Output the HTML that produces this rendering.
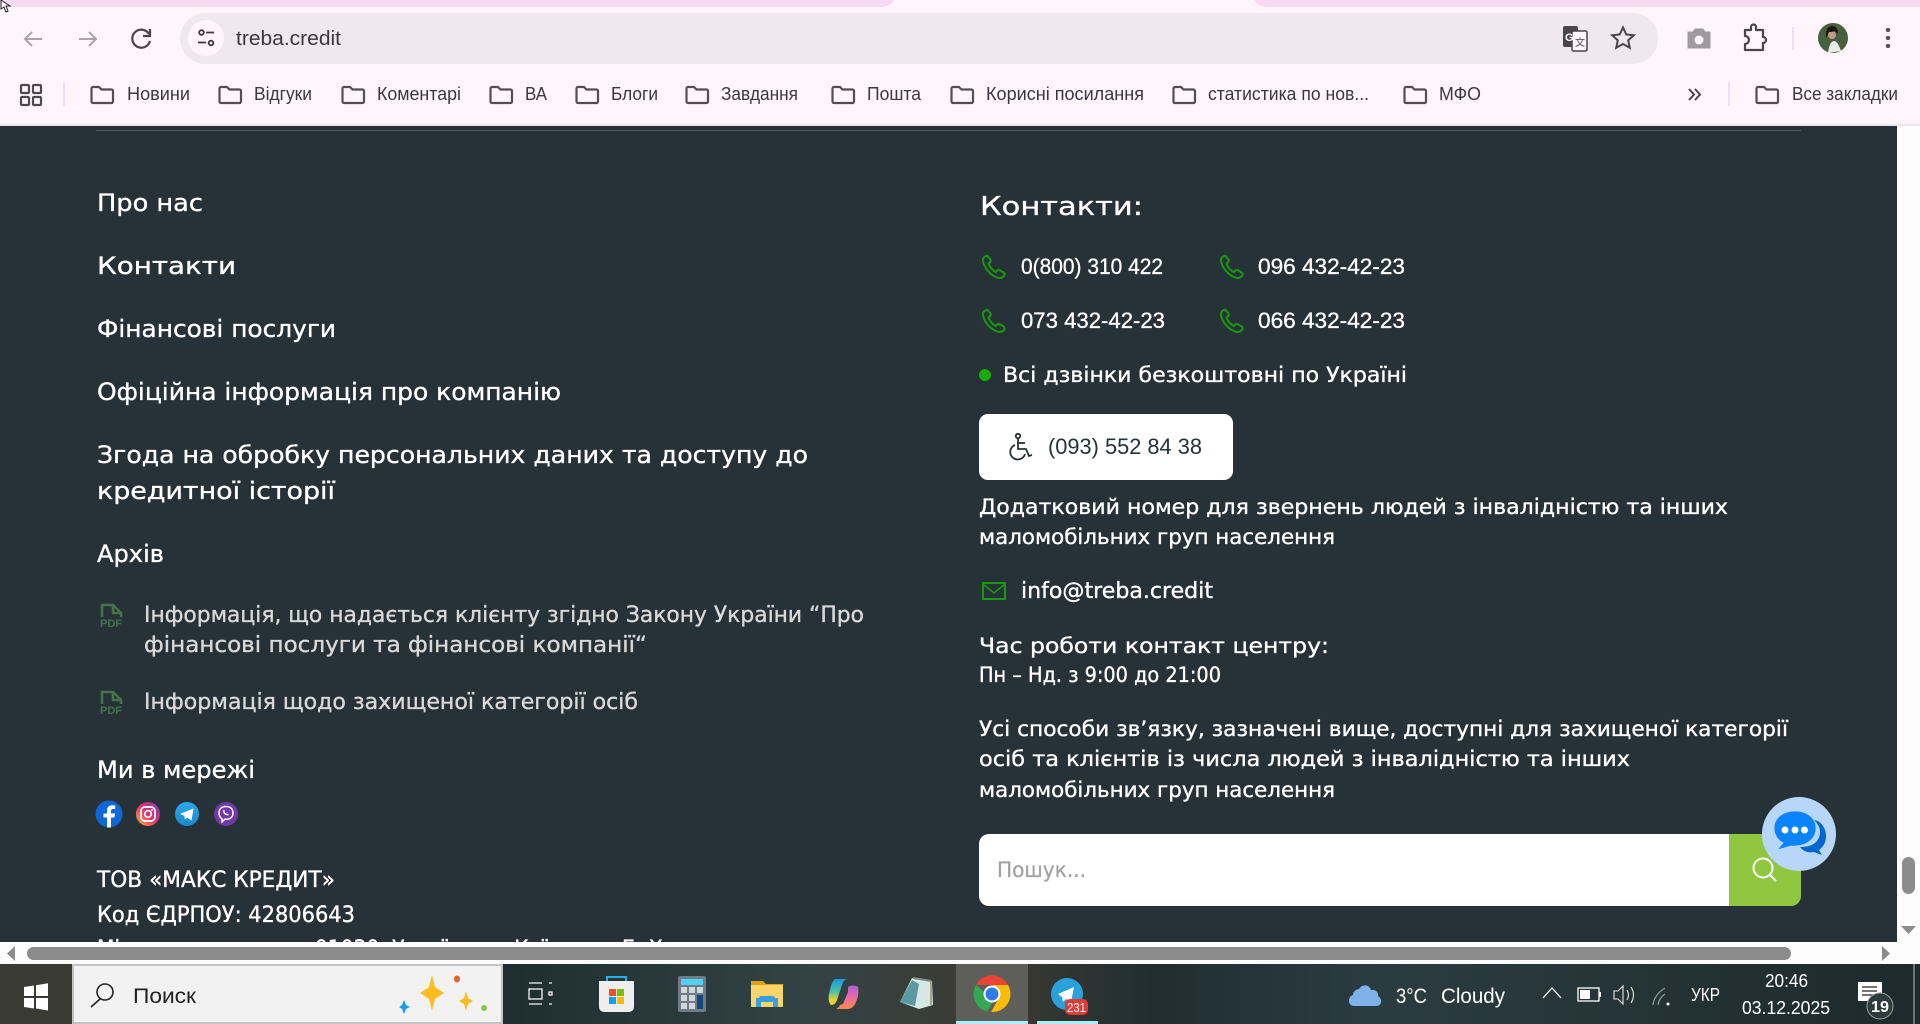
<!DOCTYPE html>
<html lang="uk"><head><meta charset="utf-8"><title>treba.credit</title>
<style>
html,body{margin:0;padding:0;width:1920px;height:1024px;overflow:hidden;background:#263238}
svg{display:block}
text{white-space:pre}
.c{font-family:"DejaVu Sans","Noto Sans CJK SC",sans-serif;fill:#fff;stroke:#fff;stroke-width:.35}
.g{fill:#d9d9d9;stroke:#d9d9d9}
.n{font-family:"Liberation Sans","Noto Sans CJK SC",sans-serif;fill:#fff;stroke:#fff;stroke-width:.3}
.u{font-family:"Liberation Sans","Noto Sans CJK SC",sans-serif;fill:#3d3640;font-size:18px}
.t{font-family:"Liberation Sans","Noto Sans CJK SC",sans-serif;fill:#fff}
</style></head><body>
<svg width="1920" height="1024" viewBox="0 0 1920 1024" xmlns="http://www.w3.org/2000/svg">
<defs>
<g id="fld"><path d="M1.500 4.500a1.500 1.500 0 0 1 1.500-1.500h6l2.500 2.500h10a1.500 1.500 0 0 1 1.500 1.500v10.500a1.500 1.500 0 0 1-1.500 1.500H3a1.500 1.500 0 0 1-1.500-1.500z" transform="translate(0,-1)" fill="none" stroke="#544e53" stroke-width="2.200"/></g>
<g id="ph"><path d="M-8-11c-2 1-3.500 2.500-3 5 1 6 6 13 13 16 3 1.500 6 1 8-1 1.200-1.500 1-2.500-.5-3.500l-3.500-2.200c-1.200-.7-2.200-.5-3 .5l-1 1.200c-3-1-6.500-5-7.500-8.500l1.300-1c1-.8 1.200-1.800.7-3L-6-10.500c-.5-1-1.200-1-2-.5z" fill="none" stroke="#169a0b" stroke-width="2"/></g>
<g id="pdf" fill="none" stroke="#44754a" stroke-width="2.500"><path d="M2 14V2h11l8 8v4M13 2v8h8"/><text x="0" y="24" font-family="Liberation Sans" font-weight="700" font-size="11" fill="#44754a" stroke="none" textLength="22" lengthAdjust="spacingAndGlyphs">PDF</text></g>
<linearGradient id="tb" x1="0" x2="1" y1="0" y2="0"><stop offset="0" stop-color="#3a3a34"/><stop offset=".27" stop-color="#1f2f31"/><stop offset=".42" stop-color="#334345"/><stop offset=".52" stop-color="#3c3a30"/><stop offset=".6" stop-color="#202e32"/><stop offset=".72" stop-color="#2b3c40"/><stop offset="1" stop-color="#1d2a2d"/></linearGradient>
<linearGradient id="ig" x1="0" x2="1" y1="1" y2="0"><stop offset="0" stop-color="#fdb944"/><stop offset=".5" stop-color="#e1306c"/><stop offset="1" stop-color="#7a3fc0"/></linearGradient>
<linearGradient id="tg" x1="0" x2="0" y1="0" y2="1"><stop offset="0" stop-color="#2aabee"/><stop offset="1" stop-color="#1c88c7"/></linearGradient>
<linearGradient id="cp1" x1="0" x2="0" y1="0" y2="1"><stop offset="0" stop-color="#0f9be8"/><stop offset=".5" stop-color="#50c2a0"/><stop offset=".8" stop-color="#e8d030"/></linearGradient>
<linearGradient id="cp2" x1="0" x2="0" y1="0" y2="1"><stop offset="0" stop-color="#b45fd8"/><stop offset=".5" stop-color="#e86aa8"/><stop offset="1" stop-color="#ff8a4c"/></linearGradient>
</defs>

<!-- Chrome frame -->
<rect width="1920" height="126" fill="#fff5fb"/>
<path d="M0 0H894Q890 7 880 7H0z" fill="#f7d9f0"/>
<path d="M1254 0H1920V7H1268Q1258 7 1254 0z" fill="#f7d9f0"/>
<rect x="0" y="124" width="1920" height="2" fill="#eee4ea"/>
<path d="M1 0l0 9 3-2 2 5 2-1-2-5h4z" fill="#fff" stroke="#222"/>
<path d="M42 39H25M32 32l-7 7 7 7" fill="none" stroke="#aba5aa" stroke-width="2"/>
<path d="M79 39H96M89 32l7 7-7 7" fill="none" stroke="#aba5aa" stroke-width="2"/>
<path d="M149 34a9 9 0 1 0 1 7M150 29v7h-7" fill="none" stroke="#4b444a" stroke-width="2.200"/>
<rect x="180" y="13" width="1478" height="51" rx="25.500" fill="#f0e7ef"/>
<circle cx="206" cy="38" r="18" fill="#fff5fb"/>
<g fill="none" stroke="#3d3640" stroke-width="1.800"><circle cx="201.500" cy="32.500" r="2.300"/><path d="M206 32.500h8M198 42.500h8"/><circle cx="211" cy="43" r="2.300"/></g>
<text x="236" y="45" class="u" style="font-size:20px" textLength="105" lengthAdjust="spacingAndGlyphs">treba.credit</text>
<rect x="1563" y="26" width="15" height="21" rx="2" fill="#4b444a"/><rect x="1572" y="31" width="15" height="20" rx="1.500" fill="#fff5fb" stroke="#4b444a" stroke-width="1.500"/>
<text x="1565" y="41" font-family="Liberation Sans" font-weight="700" font-size="11" fill="#fff">G</text>
<text x="1575" y="46" font-family="Noto Sans CJK SC" font-size="10" fill="#4b444a">文</text>
<path d="M1623 27.500l3.300 7 7.500.8-5.600 5 1.600 7.500-6.800-3.800-6.800 3.800 1.600-7.500-5.600-5 7.500-.8z" fill="none" stroke="#4b444a" stroke-width="2"/>
<path d="M1688 32h5l2-3h8l2 3h5v16h-22z" fill="#9f9a9e" stroke="#9f9a9e" stroke-linejoin="round"/><circle cx="1699" cy="40" r="4.500" fill="#fff5fb"/>
<path d="M1745 30h6v-3a2 2 0 0 1 5 0v3h7v7a3 3 0 0 1 0 6v7h-18v-6a3.500 3.500 0 0 0 0-8z" fill="none" stroke="#4b444a" stroke-width="2.200" stroke-linejoin="round"/>
<rect x="1792" y="27" width="2" height="23" fill="#f7d9f0"/>
<circle cx="1833" cy="38" r="15" fill="#47603f"/><path d="M1828 53c1-8 3-12 6-12s5 4 7 10z" fill="#e8ecea"/><circle cx="1832" cy="35" r="4" fill="#c39a85"/><path d="M1826 38c-1-8 2-12 6-12s6 3 6 8l-3-3c-3 1-5 1-6 1z" fill="#1a1714"/>
<g fill="#4b444a"><circle cx="1888" cy="30" r="2"/><circle cx="1888" cy="38" r="2"/><circle cx="1888" cy="46" r="2"/></g>

<g fill="none" stroke="#4f484e" stroke-width="2.200"><rect x="21" y="85" width="8" height="8" rx="1"/><rect x="33" y="85" width="8" height="8" rx="1"/><rect x="21" y="97" width="8" height="8" rx="1"/><rect x="33" y="97" width="8" height="8" rx="1"/></g>
<rect x="63" y="82" width="2" height="24" fill="#f7d9f0"/>
<use href="#fld" x="90" y="85"/><text x="127" y="100" class="u" textLength="63" lengthAdjust="spacingAndGlyphs">Новини</text>
<use href="#fld" x="218" y="85"/><text x="254" y="100" class="u" textLength="58" lengthAdjust="spacingAndGlyphs">Відгуки</text>
<use href="#fld" x="341" y="85"/><text x="377" y="100" class="u" textLength="84" lengthAdjust="spacingAndGlyphs">Коментарі</text>
<use href="#fld" x="489" y="85"/><text x="525" y="100" class="u" textLength="22" lengthAdjust="spacingAndGlyphs">ВА</text>
<use href="#fld" x="575" y="85"/><text x="611" y="100" class="u" textLength="47" lengthAdjust="spacingAndGlyphs">Блоги</text>
<use href="#fld" x="685" y="85"/><text x="721" y="100" class="u" textLength="77" lengthAdjust="spacingAndGlyphs">Завдання</text>
<use href="#fld" x="831" y="85"/><text x="867" y="100" class="u" textLength="54" lengthAdjust="spacingAndGlyphs">Пошта</text>
<use href="#fld" x="950" y="85"/><text x="986" y="100" class="u" textLength="158" lengthAdjust="spacingAndGlyphs">Корисні посилання</text>
<use href="#fld" x="1172" y="85"/><text x="1208" y="100" class="u" textLength="161" lengthAdjust="spacingAndGlyphs">статистика по нов...</text>
<use href="#fld" x="1403" y="85"/><text x="1439" y="100" class="u" textLength="42" lengthAdjust="spacingAndGlyphs">МФО</text>
<path d="M1689 89l5 5.500-5 5.500M1695 89l5 5.500-5 5.500" fill="none" stroke="#4b444a" stroke-width="2"/>
<rect x="1728" y="82" width="2" height="24" fill="#f7d9f0"/>
<use href="#fld" x="1755" y="85"/><text x="1792" y="100" class="u" textLength="106" lengthAdjust="spacingAndGlyphs">Все закладки</text>

<!-- Page -->
<rect x="0" y="126" width="1897" height="816" fill="#263238"/>
<rect x="96" y="130" width="1705" height="1" fill="#4d595f"/>

<text class="c" x="97" y="211" font-size="24" textLength="106" lengthAdjust="spacingAndGlyphs">Про нас</text>
<text class="c" x="97" y="274" font-size="24" textLength="139" lengthAdjust="spacingAndGlyphs">Контакти</text>
<text class="c" x="97" y="337" font-size="24" textLength="239" lengthAdjust="spacingAndGlyphs">Фінансові послуги</text>
<text class="c" x="97" y="400" font-size="24" textLength="464" lengthAdjust="spacingAndGlyphs">Офіційна інформація про компанію</text>
<text class="c" x="97" y="463" font-size="24" textLength="711" lengthAdjust="spacingAndGlyphs">Згода на обробку персональних даних та доступу до</text>
<text class="c" x="97" y="499" font-size="24" textLength="238" lengthAdjust="spacingAndGlyphs">кредитної історії</text>
<text class="c" x="97" y="562" font-size="24" textLength="67" lengthAdjust="spacingAndGlyphs">Архів</text>
<text class="c g" x="144" y="622" font-size="22" textLength="720" lengthAdjust="spacingAndGlyphs">Інформація, що надається клієнту згідно Закону України “Про</text>
<text class="c g" x="144" y="652" font-size="22" textLength="503" lengthAdjust="spacingAndGlyphs">фінансові послуги та фінансові компанії“</text>
<text class="c g" x="144" y="709" font-size="22" textLength="494" lengthAdjust="spacingAndGlyphs">Інформація щодо захищеної категорії осіб</text>
<text class="c" x="97" y="778" font-size="24" textLength="158" lengthAdjust="spacingAndGlyphs">Ми в мережі</text>
<text class="c" x="97" y="887" font-size="22" textLength="238" lengthAdjust="spacingAndGlyphs">ТОВ «МАКС КРЕДИТ»</text>
<text class="c" x="97" y="922" font-size="22" textLength="258" lengthAdjust="spacingAndGlyphs">Код ЄДРПОУ: 42806643</text>
<text class="c" x="97" y="956" font-size="22" textLength="718" lengthAdjust="spacingAndGlyphs">Місцезнаходження: 01030, Україна, м. Київ, вул. Б. Хмельницького</text>

<text class="c" x="980" y="215" font-size="26" textLength="163" lengthAdjust="spacingAndGlyphs">Контакти:</text>
<text class="c" x="1003" y="382" font-size="21" textLength="404" lengthAdjust="spacingAndGlyphs">Всі дзвінки безкоштовні по Україні</text>
<text class="c" x="979" y="514" font-size="21" textLength="749" lengthAdjust="spacingAndGlyphs">Додатковий номер для звернень людей з інвалідністю та інших</text>
<text class="c" x="979" y="544" font-size="21" textLength="356" lengthAdjust="spacingAndGlyphs">маломобільних груп населення</text>
<text class="c" x="1021" y="598" font-size="22" textLength="192" lengthAdjust="spacingAndGlyphs">info@treba.credit</text>
<text class="c" x="979" y="653" font-size="21" textLength="350" lengthAdjust="spacingAndGlyphs">Час роботи контакт центру:</text>
<text class="c" x="979" y="682" font-size="21" textLength="242" lengthAdjust="spacingAndGlyphs">Пн – Нд. з 9:00 до 21:00</text>
<text class="c" x="979" y="736" font-size="21" textLength="809" lengthAdjust="spacingAndGlyphs">Усі способи зв’язку, зазначені вище, доступні для захищеної категорії</text>
<text class="c" x="979" y="766" font-size="21" textLength="651" lengthAdjust="spacingAndGlyphs">осіб та клієнтів із числа людей з інвалідністю та інших</text>
<text class="c" x="979" y="797" font-size="21" textLength="356" lengthAdjust="spacingAndGlyphs">маломобільних груп населення</text>

<use href="#pdf" x="100" y="603"/><use href="#pdf" x="100" y="690"/>

<!-- social -->
<circle cx="109" cy="814" r="13.500" fill="#0f68d6"/>
<path d="M111 827.500v-10h3.500l.6-4H111v-2.500c0-1.200.5-2 2-2h2.200v-3.500c-1-.2-2-.3-3-.3-3.200 0-5.200 2-5.200 5.300v3H103.500v4h3.500v10z" fill="#fff"/>
<circle cx="148" cy="814" r="12" fill="url(#ig)"/><rect x="141" y="807" width="14" height="14" rx="4" fill="none" stroke="#fff" stroke-width="1.700"/><circle cx="148" cy="814" r="3.300" fill="none" stroke="#fff" stroke-width="1.700"/><circle cx="152" cy="810" r="1" fill="#fff"/>
<circle cx="187" cy="814" r="12" fill="url(#tg)"/><path d="M180 814l13.500-5.500-2 12-4.500-3-2 2-.7-3.700z" fill="#fff"/>
<circle cx="226" cy="814" r="12" fill="#7239a6"/><path d="M226 806.500c-4.500 0-7 2.500-7 6.500 0 3 1.200 4.800 3 5.800v3l2.800-2.500h1.200c4.500 0 7-2.500 7-6.300 0-4-2.500-6.500-7-6.500z" fill="none" stroke="#fff" stroke-width="1.500"/><path d="M224 810c-.8 3 1.500 5 4.500 4.500" fill="none" stroke="#fff" stroke-width="1.500"/>

<!-- phones -->
<use href="#ph" x="994" y="267"/><use href="#ph" x="1232" y="267"/><use href="#ph" x="994" y="321"/><use href="#ph" x="1232" y="321"/>
<text class="n" x="1021" y="274" font-size="22" textLength="142" lengthAdjust="spacingAndGlyphs">0(800) 310 422</text>
<text class="n" x="1258" y="274" font-size="22" textLength="147" lengthAdjust="spacingAndGlyphs">096 432-42-23</text>
<text class="n" x="1021" y="328" font-size="22" textLength="144" lengthAdjust="spacingAndGlyphs">073 432-42-23</text>
<text class="n" x="1258" y="328" font-size="22" textLength="147" lengthAdjust="spacingAndGlyphs">066 432-42-23</text>
<circle cx="985" cy="375" r="6" fill="#1aab00"/>

<rect x="979" y="414" width="254" height="66" rx="9" fill="#fff"/>
<g fill="none" stroke="#263238" stroke-width="1.800"><circle cx="1018" cy="436" r="2.200"/><path d="M1018 439v10h8l3 7 3-1"/><path d="M1018 443h7"/><path d="M1015 445a7.500 7.500 0 1 0 10 9"/></g>
<text x="1048" y="454" font-family="Liberation Sans" font-size="22" fill="#263238" textLength="154" lengthAdjust="spacingAndGlyphs">(093) 552 84 38</text>

<rect x="983" y="583" width="22" height="16" fill="none" stroke="#169a0b" stroke-width="2"/><path d="M983 584l11 9 11-9" fill="none" stroke="#169a0b" stroke-width="1.600"/>

<!-- search -->
<path d="M989 834H1729V906H989a10 10 0 0 1-10-10V844a10 10 0 0 1 10-10z" fill="#fff"/>
<path d="M1729 834h72V896a10 10 0 0 1-10 10h-62z" fill="#8fc741"/>
<text x="997" y="877" font-family="DejaVu Sans" font-size="21" fill="#a3a3a3" stroke="#a3a3a3" stroke-width=".3" textLength="89" lengthAdjust="spacingAndGlyphs">Пошук...</text>
<circle cx="1763" cy="868" r="9.500" fill="none" stroke="#fff" stroke-width="2"/><path d="M1770 875l6 6" stroke="#fff" stroke-width="2"/>
<circle cx="1799" cy="834" r="37" fill="#b8d6f8"/>
<path d="M1800 847c10 0 19-3 20-14 .5-5-2-9-6-13 7 1 12 8 12 16 0 7-3 11-7 14l3 5-8-3c-5 1-10 0-14-5z" fill="#0067ce"/>
<path d="M1795 811c-12 0-21 7-21 17 0 7 4 12 9 15l-6 7 14-4c14 1 25-6 25-18 0-10-9-17-21-17z" fill="#0a84fe" stroke="#b8d6f8" stroke-width=".8"/>
<g fill="#fff"><circle cx="1785" cy="830" r="3.500"/><circle cx="1795" cy="830" r="3.500"/><circle cx="1804.500" cy="830" r="3.500"/></g>

<!-- scrollbars -->
<rect x="1897" y="126" width="23" height="816" fill="#fdfdfd"/>
<rect x="1902" y="857" width="13" height="37" rx="6.500" fill="#8c8c8c"/>
<path d="M1901 926h15l-7.500 8z" fill="#8c8c8c"/>
<rect x="0" y="942" width="1920" height="22" fill="#fdfdfd"/>
<rect x="27" y="947" width="1764" height="13" rx="6.500" fill="#8c8c8c"/>
<path d="M15 946v15l-8-7.500z" fill="#8c8c8c"/><path d="M1882 946v15l8-7.500z" fill="#8c8c8c"/>

<!-- taskbar -->
<rect x="0" y="964" width="1920" height="60" fill="url(#tb)"/>
<rect x="0" y="964" width="72" height="60" fill="#3a3a34"/>
<path d="M24 987l10-1.500v10.500H24zM36 985.200l12-2V996H36zM24 998h10v10.500L24 1007zM36 998h12v12.500l-12-2z" fill="#fff"/>
<rect x="72" y="964" width="431" height="60" fill="#c4c4c4"/><rect x="74" y="966" width="427" height="56" fill="#f2f2f2"/>
<circle cx="105" cy="992" r="8" fill="none" stroke="#222" stroke-width="1.600"/><path d="M100 999l-9 8" stroke="#222" stroke-width="1.600"/>
<text x="133" y="1003" font-family="Liberation Sans" font-size="21" fill="#222" textLength="63" lengthAdjust="spacingAndGlyphs">Поиск</text>
<path d="M432 975l3 12 9 6-9 6-3 12-3-12-9-6 9-6z" fill="#fcbd22"/>
<path d="M466 991l2 7 5 3-5 3-2 7-2-7-5-3 5-3z" fill="#fcbd22"/>
<path d="M404 1000l2 5 4 2-4 2-2 5-2-5-3-2 3-2z" fill="#1d9bf0"/>
<ellipse cx="457" cy="979" rx="3" ry="3.500" fill="#e8602c"/><circle cx="484" cy="1008" r="3" fill="#8ac640"/>

<g fill="none" stroke="#f4f4f4" stroke-width="1.300"><path d="M529 983h13M529 1004h13"/><rect x="529" y="989" width="13" height="10"/><path d="M549 983h3M549 1004h3"/><rect x="549" y="992" width="3" height="3"/></g>

<path d="M599 981h35v26a5 5 0 0 1-5 5h-25a5 5 0 0 1-5-5z" fill="#eeeeee"/><path d="M607 981v-4h19v4" fill="none" stroke="#1fb2ec" stroke-width="2"/>
<rect x="609" y="989" width="7" height="7" fill="#f25022"/><rect x="617" y="989" width="7" height="7" fill="#7fba00"/><rect x="609" y="997" width="7" height="7" fill="#00a4ef"/><rect x="617" y="997" width="7" height="7" fill="#ffb900"/>

<rect x="678" y="976" width="28" height="36" rx="2" fill="#6f7b87"/><rect x="681" y="979" width="22" height="6" fill="#4fd3f5"/>
<g fill="#d1d6da"><rect x="681" y="987" width="6" height="6"/><rect x="689" y="987" width="6" height="6"/><rect x="697" y="987" width="6" height="6"/><rect x="681" y="995" width="6" height="6"/><rect x="689" y="995" width="6" height="6"/><rect x="681" y="1003" width="6" height="6"/><rect x="689" y="1003" width="6" height="6"/></g><rect x="697" y="995" width="6" height="14" fill="#16457f"/>

<path d="M751 981h12l3 3h17v23h-32z" fill="#e0a40b"/><rect x="751" y="985" width="32" height="22" rx="1" fill="#fdd56a"/><path d="M756 1007v-9h3l1-2h14l1 2h3v9h-5v-5h-12v5z" fill="#3c9ee0"/>

<path d="M836 979h11c-3 1-4 3-5 6l-5 15c-1 3-3 5-6 5-2-2-3-6-2-11 1-4 2-9 3-11 1-2 2-4 4-4z" fill="url(#cp1)"/>
<path d="M848 987c3-2 7-2 10 0 1 5 0 11-2 15-2 5-5 7-9 7h-11c2-1 3-2 4-4l3-1 5-12c0-2 0-4 0-5z" fill="url(#cp2)"/>

<path d="M912 978l20 3 1 24-14 4-19-7z" fill="#d5e8e6"/><path d="M900 1002l12-22 7 4-4 22z" fill="#5a9aa3"/><path d="M913 978l18 3" stroke="#8a8a8a" stroke-width="2"/><path d="M931 981v24" stroke="#a08a50" stroke-width="1.500"/>

<rect x="956" y="964" width="72" height="60" fill="#5e5f58"/><rect x="956" y="1021" width="72" height="3" fill="#a9f0f6"/>
<path d="M976 985a18 18 0 0 1 32 0h-16z" fill="#ea4335"/>
<path d="M976 985a18 18 0 0 0 11 26.500l7-11.500z" fill="#34a853"/>
<path d="M1008 985h-15l6 13-8 14a18 18 0 0 0 17-27z" fill="#fbbc05"/>
<circle cx="992" cy="994" r="8.500" fill="#fff"/><circle cx="992" cy="994" r="6.500" fill="#2f7bea"/>

<rect x="1037" y="1021" width="61" height="3" fill="#a9f0f6"/>
<circle cx="1067" cy="994" r="16" fill="#2aa0dd"/><path d="M1058 994l16-7-3 15-5-3-3 3-1-5z" fill="#fff"/>
<rect x="1065" y="999" width="23" height="16" rx="5" fill="#e53935"/>
<text x="1067" y="1012" font-family="Liberation Sans" font-size="12.500" fill="#fff" textLength="19" lengthAdjust="spacingAndGlyphs">231</text>

<path d="M1354 1006c-6 0-7-9-1-11 0-4 4-6 6-6 3-5 10-5 12 1 5-1 8 3 7 6 4 2 5 10-2 10z" fill="#7fb0ea"/>
<text class="t" x="1396" y="1003" font-size="21" textLength="31" lengthAdjust="spacingAndGlyphs">3°C</text>
<text class="t" x="1441" y="1003" font-size="21" textLength="64" lengthAdjust="spacingAndGlyphs">Cloudy</text>
<path d="M1543 998l9-10 9 10" fill="none" stroke="#fff" stroke-width="1.300"/>
<rect x="1578" y="988" width="21" height="13" fill="none" stroke="#fff" stroke-width="1.300"/><rect x="1580" y="990" width="10" height="9" fill="#fff"/><rect x="1599" y="992" width="2" height="5" fill="#fff"/>
<path d="M1614 991h4l5-5v18l-5-5h-4zM1627 990q3 5 0 10M1631 987q5 8 0 16" fill="none" stroke="#e8e8e8" stroke-width="1.100"/>
<path d="M1653 1005q1-10 12-17M1658 1005q1-7 7-11" fill="none" stroke="#8c9799" stroke-width="1.300"/><circle cx="1668" cy="1004" r="1.500" fill="#fff"/>
<text class="t" x="1691" y="1001" font-size="18" textLength="29" lengthAdjust="spacingAndGlyphs">УКР</text>
<text class="t" x="1765" y="987" font-size="18" textLength="43" lengthAdjust="spacingAndGlyphs">20:46</text>
<text class="t" x="1742" y="1014" font-size="18" textLength="88" lengthAdjust="spacingAndGlyphs">03.12.2025</text>
<rect x="1858" y="982" width="24" height="19" fill="#fff"/><path d="M1862 987h15M1862 991h15M1862 995h11" stroke="#222" stroke-width="1.200"/>
<circle cx="1880" cy="1006" r="13" fill="#2d3b3d" stroke="#9a9f9f"/>
<text x="1871" y="1012" font-family="Liberation Sans" font-weight="700" font-size="16" fill="#fff" textLength="18" lengthAdjust="spacingAndGlyphs">19</text>
<rect x="1913" y="964" width="2" height="60" fill="#6c7476"/>
</svg>
</body></html>
